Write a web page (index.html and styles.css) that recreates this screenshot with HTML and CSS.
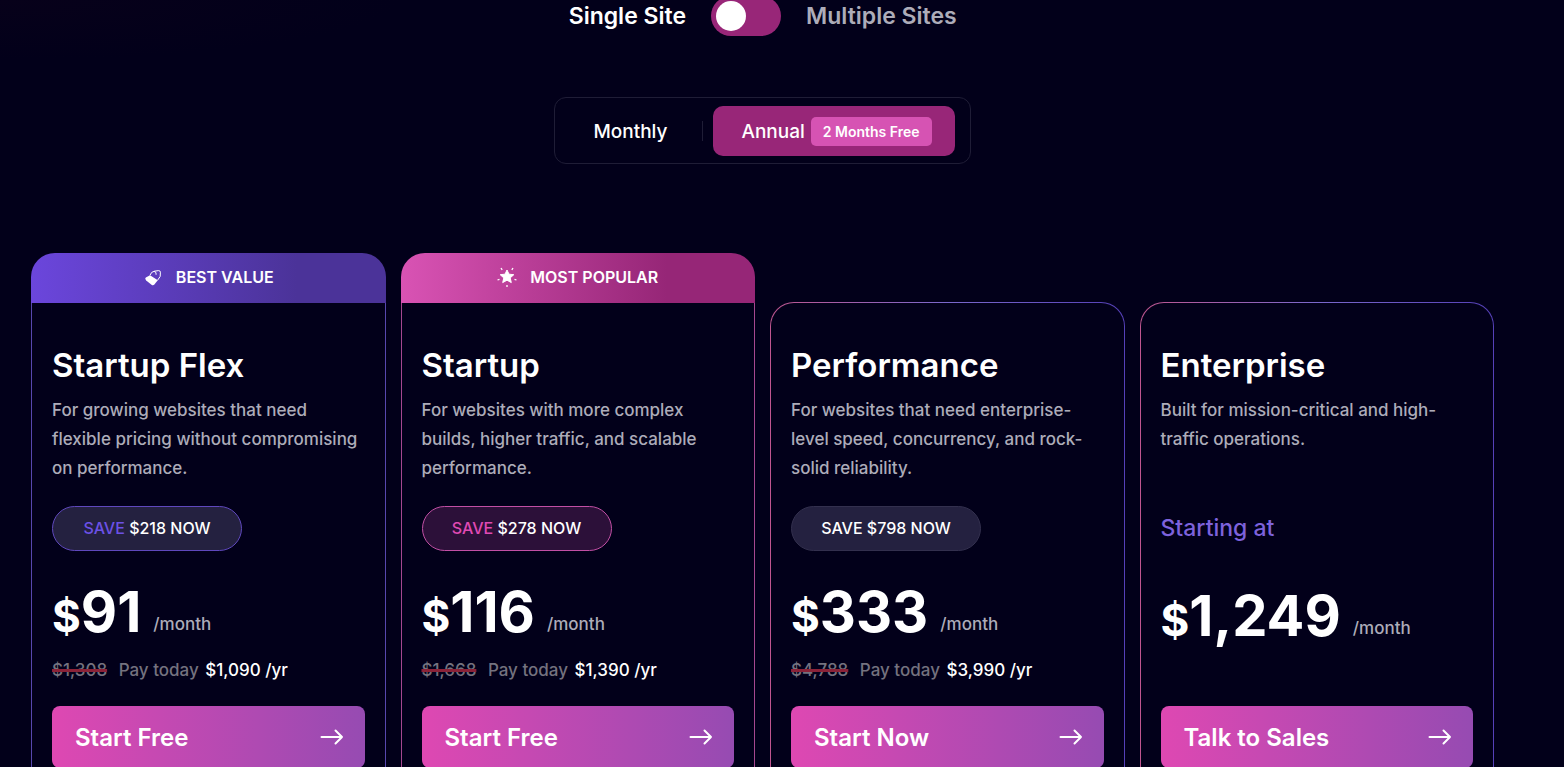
FILE: index.html
```html
<!DOCTYPE html>
<html lang="en">
<head>
  <meta charset="UTF-8" />
  <meta name="viewport" content="width=device-width, initial-scale=1.0" />
  <title>Pricing</title>
  <link rel="stylesheet" href="styles.css">
</head>
<body>
  <main class="pricing">
    <div class="site-switch">
      <label for="siteToggle">Single Site</label>
      <input type="checkbox" id="siteToggle" class="toggle">
      <label for="siteToggle" class="muted">Multiple Sites</label>
    </div>

    <div class="billing">
      <button type="button" class="period">Monthly</button>
      <button type="button" class="period selected">Annual <span class="free">2 Months Free</span></button>
    </div>

    <div class="plans">
      <section class="plan flex-plan">
        <div class="ribbon">
          <svg class="ribbon-icon" width="20" height="20" viewBox="0 0 20 20" fill="none">
            <path d="M2.8 10.6 7 8.2 14.8 13.2 11.4 17.6Q10.2 18.8 8.8 17.9L3.2 13.6Q1.4 11.8 2.8 10.6Z" fill="#fff"/>
            <path d="M7 8.2Q8.2 4.6 11.4 4.2L15.6 3.6Q17.3 3.6 17.4 5.2L17.2 9.4 14.6 13.2" stroke="#fff" stroke-width="1" stroke-linejoin="round"/>
            <path d="M11.4 4.4Q13.8 5 13.2 7.4" stroke="#fff" stroke-width="1" stroke-linecap="round"/>
          </svg>
          BEST VALUE
        </div>
        <div class="plan-body">
          <h2>Startup Flex</h2>
          <p class="about">For growing websites that need flexible pricing without compromising on performance.</p>
          <div class="save"><span>SAVE</span> $218 NOW</div>
          <div class="price"><span class="currency">$</span><strong>91</strong><span class="per">/month</span></div>
          <p class="today"><del>$1,308</del> Pay today <b>$1,090 /yr</b></p>
          <a class="cta" href="#">Start Free
            <svg width="24" height="18" viewBox="0 0 24 18"><path d="M1.5 9H22M15.5 2.5 22 9l-6.5 6.5"/></svg>
          </a>
        </div>
      </section>

      <section class="plan startup-plan">
        <div class="ribbon">
          <svg class="ribbon-icon" width="20" height="20" viewBox="0 0 20 20" fill="#fff" stroke="#fff" stroke-linejoin="round">
            <path d="M10 3 12 7.2l4.800.5-3.600 3.200 1.100 4.700L10 13.200 5.700 15.600l1.100-4.700-3.600-3.200L8 7.200Z"/>
            <path d="M10 18v2M.5 13l2-.6M19.500 13l-2-.6M4 1l1.200 1.900M16 1l-1.200 1.900" stroke-width="1.300"/>
          </svg>
          MOST POPULAR
        </div>
        <div class="plan-body">
          <h2>Startup</h2>
          <p class="about">For websites with more complex builds, higher traffic, and scalable performance.</p>
          <div class="save"><span>SAVE</span> $278 NOW</div>
          <div class="price"><span class="currency">$</span><strong>116</strong><span class="per">/month</span></div>
          <p class="today"><del>$1,668</del> Pay today <b>$1,390 /yr</b></p>
          <a class="cta" href="#">Start Free
            <svg width="24" height="18" viewBox="0 0 24 18"><path d="M1.5 9H22M15.5 2.5 22 9l-6.5 6.5"/></svg>
          </a>
        </div>
      </section>

      <section class="plan outlined">
        <div class="plan-body">
          <h2>Performance</h2>
          <p class="about">For websites that need enterprise-level speed, concurrency, and rock-solid reliability.</p>
          <div class="save"><span>SAVE</span> $798 NOW</div>
          <div class="price"><span class="currency">$</span><strong>333</strong><span class="per">/month</span></div>
          <p class="today"><del>$4,788</del> Pay today <b>$3,990 /yr</b></p>
          <a class="cta" href="#">Start Now
            <svg width="24" height="18" viewBox="0 0 24 18"><path d="M1.5 9H22M15.5 2.5 22 9l-6.5 6.5"/></svg>
          </a>
        </div>
      </section>

      <section class="plan outlined">
        <div class="plan-body">
          <h2>Enterprise</h2>
          <p class="about">Built for mission-critical and high-traffic operations.</p>
          <p class="starting">Starting at</p>
          <div class="price"><span class="currency">$</span><strong>1,249</strong><span class="per">/month</span></div>
          <a class="cta" href="#">Talk to Sales
            <svg width="24" height="18" viewBox="0 0 24 18"><path d="M1.5 9H22M15.5 2.5 22 9l-6.5 6.5"/></svg>
          </a>
        </div>
      </section>
    </div>
  </main>
</body>
</html>
```
FILE: styles.css
```css
* {
  box-sizing: border-box;
}

body {
  margin: 0;
  height: 100vh;
  overflow: hidden;
  background: radial-gradient(ellipse 400px 60px at 0 0, #07011a, #02001a) #02001a;
  color: #fff;
  font-family: Inter, "Liberation Sans", sans-serif;
  font-size: 17px;
}

h2,
p {
  margin: 0;
}

.pricing {
  margin-top: -5px;
  padding: 0 70px 0 31px;
}

.site-switch {
  display: grid;
  grid-template-columns: 1fr auto 1fr;
  align-items: center;
  gap: 25px;
  padding-right: 33px;
  font-size: 23px;
  font-weight: 600;
  line-height: 42px;
}

.site-switch label:first-child {
  text-align: right;
}

.muted {
  color: #adacb9;
}

.toggle {
  appearance: none;
  width: 70px;
  height: 40px;
  margin: 0;
  padding: 5px;
  border-radius: 20px;
  background: #982678;
}

.toggle::before {
  content: "";
  display: block;
  width: 30px;
  height: 30px;
  border-radius: 50%;
  background: #fff;
}

.toggle:checked::before {
  margin-left: auto;
}

.billing {
  display: flex;
  align-items: center;
  width: fit-content;
  margin: 60px auto 89px;
  padding: 8px 15px 7px 8px;
  border: 1px solid #1f1d36;
  border-radius: 12px;
}

.period {
  display: flex;
  align-items: center;
  gap: 6px;
  height: 50px;
  padding: 0 36px 0 30px;
  border: 0;
  border-radius: 10px;
  background: none;
  color: #fff;
  font: 500 19px Inter, "Liberation Sans", sans-serif;
}

.selected {
  margin-left: 10px;
  padding: 0 23px 0 28px;
  background: #982678;
}

.billing .period:first-child {
  background: linear-gradient(#1f1d36, #1f1d36) right center / 1px 20px no-repeat;
}

.free {
  padding: 0 12px;
  border-radius: 5px;
  background: #d653b3;
  font-size: 14px;
  font-weight: 600;
  line-height: 29px;
}

.plans {
  display: grid;
  grid-template-columns: repeat(4, 1fr);
  gap: 15px;
}

.plan {
  display: flex;
  flex-direction: column;
}

.ribbon {
  display: flex;
  justify-content: center;
  align-items: center;
  gap: 13px;
  height: 50px;
  padding-bottom: 2px;
  border-radius: 24px 24px 0 0;
  font-size: 16px;
  font-weight: 600;
}

.flex-plan .ribbon {
  background: linear-gradient(90deg, #6b46dc, #4b3399 75%);
}

.startup-plan .ribbon {
  background: linear-gradient(90deg, #d953b4, #962677 75%);
}

.plan-body {
  display: flex;
  flex-direction: column;
  flex: 1;
  padding: 40px 20px;
  border: 1px solid #5747ae;
  border-top: 0;
}

.startup-plan .plan-body {
  border-color: #a5478f;
}

.outlined {
  margin-top: 49px;
}

.outlined .plan-body {
  border: 1px solid transparent;
  border-radius: 24px 24px 0 0;
  background:
    linear-gradient(#02001a, #02001a) padding-box,
    linear-gradient(90deg, #c0568f, #7a68cc 50%, #5540b8) border-box;
}

h2 {
  font-size: 33px;
  font-weight: 600;
  line-height: 44px;
}

.about {
  height: 87px;
  margin-top: 9px;
  color: #adacb9;
  font-weight: 500;
  line-height: 29px;
}

.save {
  width: fit-content;
  min-width: 190px;
  margin-top: 23px;
  border: 1px solid #33304e;
  border-radius: 23px;
  background: #242140;
  font-size: 16px;
  font-weight: 500;
  line-height: 43px;
  text-align: center;
}

.flex-plan .save {
  border-color: #5f48bd;
}

.flex-plan .save span {
  color: #6c51e6;
}

.startup-plan .save {
  border-color: #c24fa5;
  background: #2c1039;
}

.startup-plan .save span {
  color: #e04ab4;
}

.starting {
  margin-top: 23px;
  color: #7d62dc;
  font-size: 23px;
  font-weight: 500;
  line-height: 45px;
}

.price {
  display: flex;
  align-items: baseline;
  margin-top: 25px;
  line-height: 1;
}

.starting + .price {
  margin-top: 29px;
}

.currency {
  font-size: 44px;
  font-weight: 700;
}

.price strong {
  font-size: 56px;
  font-weight: 700;
  line-height: 72px;
}

.per {
  align-self: flex-end;
  margin-left: 12px;
  color: #adacb9;
  font-weight: 500;
  line-height: 48px;
}

.today {
  margin-top: 9px;
  color: #74727f;
  font-weight: 500;
  line-height: 26px;
}

.today del {
  margin-right: 7px;
  text-decoration: line-through 3px #8a2238;
}

.today b {
  margin-left: 2px;
  color: #fff;
  font-weight: 500;
}

.cta {
  display: flex;
  justify-content: space-between;
  align-items: center;
  height: 62px;
  margin-top: auto;
  padding: 0 21px 0 23px;
  border-radius: 8px;
  background: linear-gradient(90deg, #de48b2, #964bb2);
  color: #fff;
  font-size: 24px;
  font-weight: 600;
  text-decoration: none;
}

.today + .cta {
  margin-top: 23px;
}

.cta svg {
  fill: none;
  stroke: #fff;
  stroke-width: 2;
  stroke-linecap: round;
  stroke-linejoin: round;
}
```
